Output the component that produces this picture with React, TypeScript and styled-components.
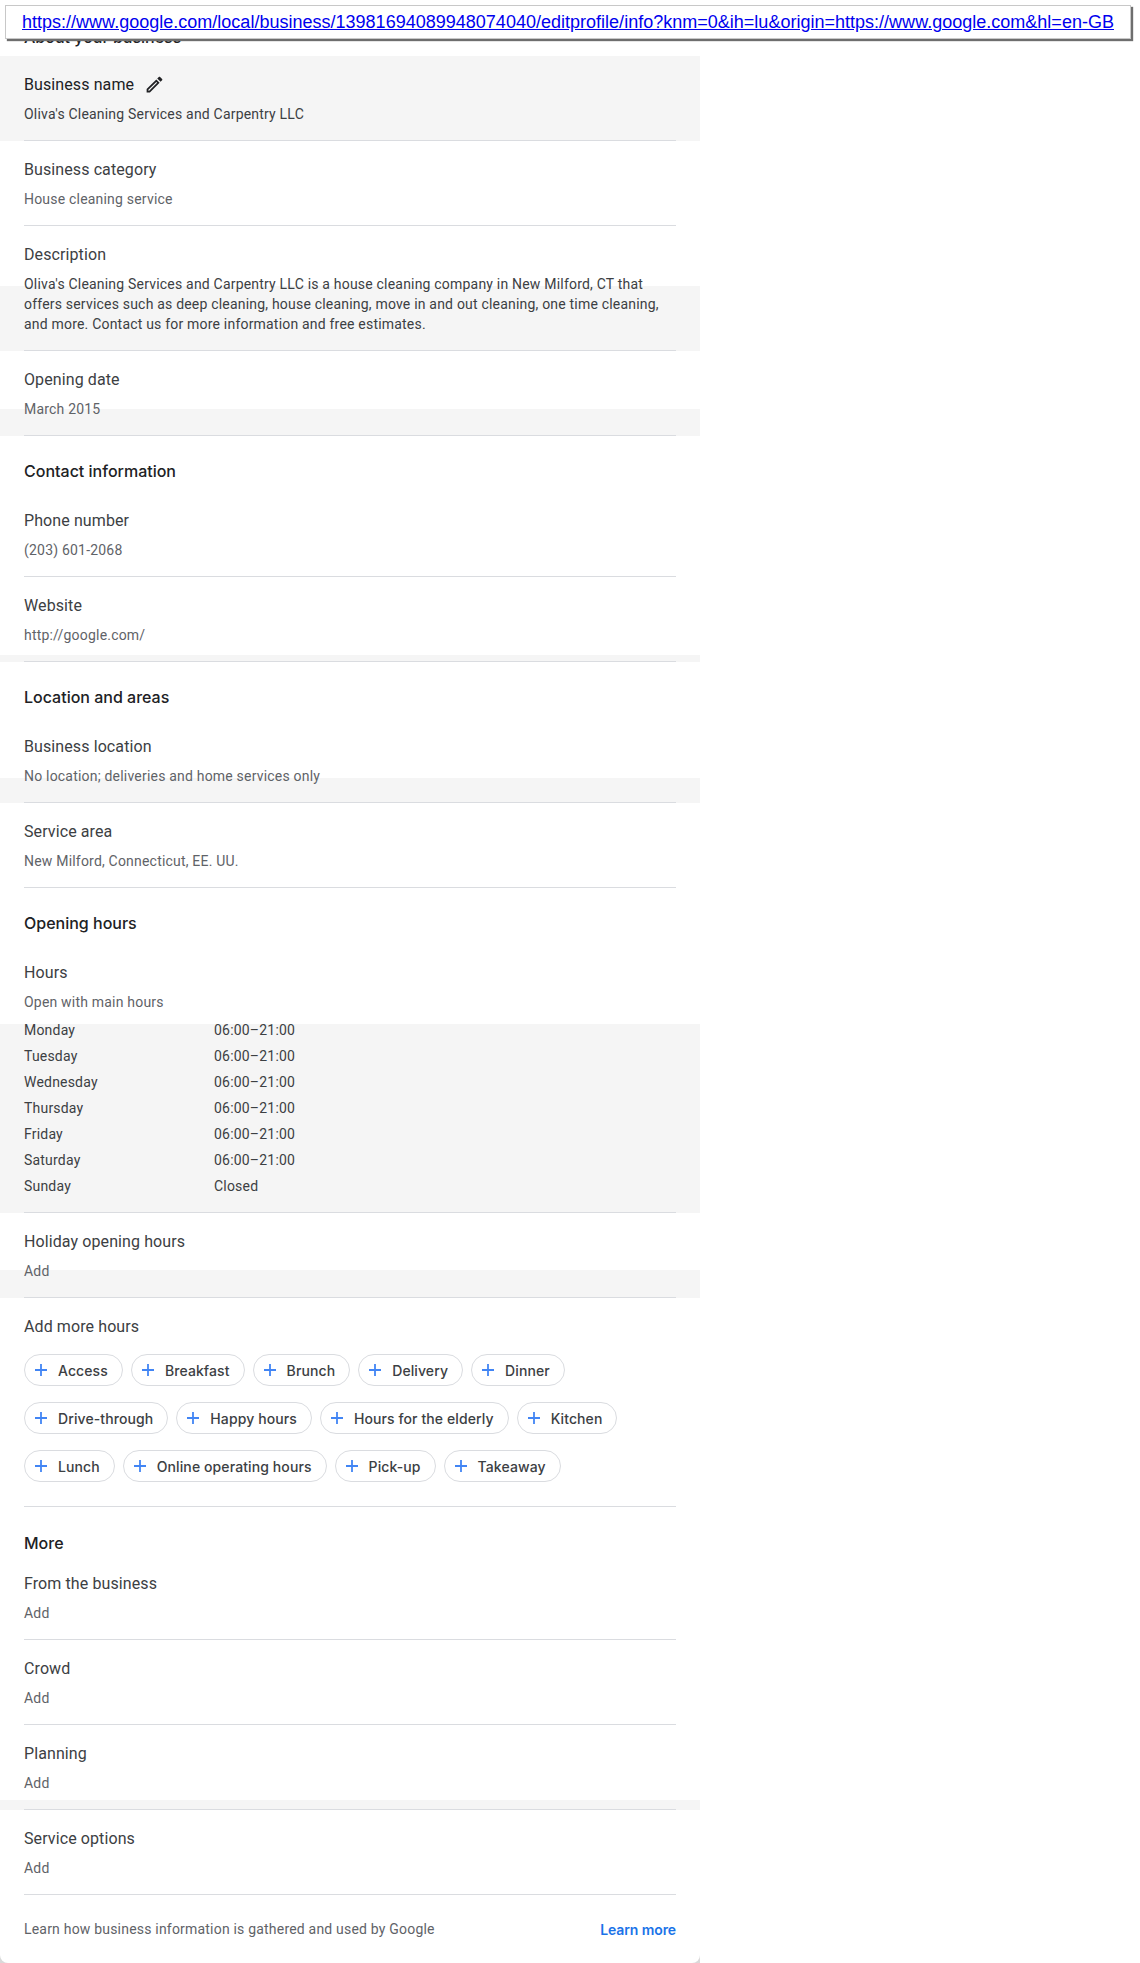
import React from 'react'
import styled, { createGlobalStyle } from 'styled-components'

const GlobalStyle = createGlobalStyle`
  html, body {
    margin: 0;
    padding: 0;
    background: #ffffff;
  }
`

const PROFILE_URL =
  'https://www.google.com/local/business/13981694089948074040/editprofile/info?knm=0&ih=lu&origin=https://www.google.com&hl=en-GB'

const HOURS = [
  ['Monday', '06:00–21:00'],
  ['Tuesday', '06:00–21:00'],
  ['Wednesday', '06:00–21:00'],
  ['Thursday', '06:00–21:00'],
  ['Friday', '06:00–21:00'],
  ['Saturday', '06:00–21:00'],
  ['Sunday', 'Closed'],
]

const CHIP_ROWS = [
  ['Access', 'Breakfast', 'Brunch', 'Delivery', 'Dinner'],
  ['Drive-through', 'Happy hours', 'Hours for the elderly', 'Kitchen'],
  ['Lunch', 'Online operating hours', 'Pick-up', 'Takeaway'],
]

const App = () => {
  return (
    <Page>
      <GlobalStyle />
      <UrlBanner>
        <a href="#url">{PROFILE_URL}</a>
      </UrlBanner>
      <Sheet>
        <Panel>
          <TopTitle>About your business</TopTitle>
          <Row $band={85}>
            <RowInner>
              <Label $strong>
                Business name
                <PencilIcon viewBox="0 0 24 24">
                  <path d="M14.06 9.02l.92.92L5.92 19H5v-.92l9.06-9.06M17.66 3c-.25 0-.51.1-.7.29l-1.83 1.83 3.75 3.75 1.83-1.83c.39-.39.39-1.02 0-1.41l-2.34-2.34c-.2-.2-.45-.29-.71-.29zm-3.6 3.19L3 17.25V21h3.75L17.81 9.94l-3.75-3.75z" />
                </PencilIcon>
              </Label>
              <Value $dark>Oliva's Cleaning Services and Carpentry LLC</Value>
            </RowInner>
          </Row>
          <Row>
            <RowInner>
              <Label>Business category</Label>
              <Value>House cleaning service</Value>
            </RowInner>
          </Row>
          <Row $band={65}>
            <RowInner>
              <Label>Description</Label>
              <Value $dark>
                Oliva's Cleaning Services and Carpentry LLC is a house cleaning company in New Milford, CT that
                offers services such as deep cleaning, house cleaning, move in and out cleaning, one time cleaning,
                and more. Contact us for more information and free estimates.
              </Value>
            </RowInner>
          </Row>
          <Row $band={27}>
            <RowInner>
              <Label>Opening date</Label>
              <Value>March 2015</Value>
            </RowInner>
          </Row>

          <SectionTitle>Contact information</SectionTitle>
          <Row>
            <RowInner>
              <Label>Phone number</Label>
              <Value>(203) 601-2068</Value>
            </RowInner>
          </Row>
          <Row $band={7}>
            <RowInner>
              <Label>Website</Label>
              <Value>http://google.com/</Value>
            </RowInner>
          </Row>

          <SectionTitle>Location and areas</SectionTitle>
          <Row $band={25}>
            <RowInner>
              <Label>Business location</Label>
              <Value>No location; deliveries and home services only</Value>
            </RowInner>
          </Row>
          <Row>
            <RowInner>
              <Label>Service area</Label>
              <Value>New Milford, Connecticut, EE. UU.</Value>
            </RowInner>
          </Row>

          <SectionTitle>Opening hours</SectionTitle>
          <Row $band={189}>
            <RowInner>
              <Label>Hours</Label>
              <Value>Open with main hours</Value>
              <HoursTable>
                {HOURS.map(([day, time]) => (
                  <HoursRow key={day}>
                    <span>{day}</span>
                    <span>{time}</span>
                  </HoursRow>
                ))}
              </HoursTable>
            </RowInner>
          </Row>
          <Row $band={28}>
            <RowInner>
              <Label>Holiday opening hours</Label>
              <Value>Add</Value>
            </RowInner>
          </Row>
          <Row>
            <ChipsInner>
              <Label>Add more hours</Label>
              <ChipGroup>
                {CHIP_ROWS.map((chips) => (
                  <ChipRow key={chips[0]}>
                    {chips.map((chip) => (
                      <Chip key={chip}>
                        <PlusIcon viewBox="0 0 18 18">
                          <path d="M15 9.900H9.900V15H8.100V9.900H3V8.100h5.100V3h1.800v5.100H15z" />
                        </PlusIcon>
                        {chip}
                      </Chip>
                    ))}
                  </ChipRow>
                ))}
              </ChipGroup>
            </ChipsInner>
          </Row>

          <MoreTitle>More</MoreTitle>
          <Row>
            <RowInner>
              <Label>From the business</Label>
              <Value>Add</Value>
            </RowInner>
          </Row>
          <Row>
            <RowInner>
              <Label>Crowd</Label>
              <Value>Add</Value>
            </RowInner>
          </Row>
          <Row $band={10}>
            <RowInner>
              <Label>Planning</Label>
              <Value>Add</Value>
            </RowInner>
          </Row>
          <Row>
            <RowInner>
              <Label>Service options</Label>
              <Value>Add</Value>
            </RowInner>
          </Row>

          <Footer>
            <FooterText>Learn how business information is gathered and used by Google</FooterText>
            <LearnMore href="#learn">Learn more</LearnMore>
          </Footer>
        </Panel>
      </Sheet>
    </Page>
  )
}

const Page = styled.main`
  position: relative;
  width: 1140px;
  height: 1963px;
  overflow: hidden;
  font-family: Roboto, 'Liberation Sans', sans-serif;
`

const UrlBanner = styled.div`
  position: absolute;
  top: 5px;
  left: 5px;
  box-sizing: border-box;
  width: 1126px;
  height: 34px;
  padding: 5px 0 0 16px;
  background: #ffffff;
  border: 1px solid #c8c8c8;
  box-shadow: 2px 2px 1px #6e6e6e;
  font-family: 'Liberation Sans', Arial, sans-serif;
  font-size: 18px;
  letter-spacing: 0.01px;
  line-height: 22px;
  white-space: nowrap;

  a {
    color: #0000ee;
    text-decoration: underline;
  }
`

const Sheet = styled.div`
  width: 700px;
  background: linear-gradient(to top, #d9d9d9 8px, transparent 8px);
`

const Panel = styled.div`
  height: 1963px;
  background: #ffffff;
  border-radius: 0 0 8px 8px;
  overflow: hidden;
`

const SectionTitle = styled.h2`
  margin: 0;
  padding: 23px 24px 9px;
  font-family: Inter, Roboto, sans-serif;
  font-size: 16px;
  font-weight: 500;
  line-height: 24px;
  color: #202124;
`

const TopTitle = styled(SectionTitle)`
  padding: 25px 24px 7px;
`

const MoreTitle = styled(SectionTitle)`
  padding: 24px 24px 0;
`

const Row = styled.div<{ $band?: number }>`
  padding: 0 24px;
  background: ${(p) =>
    p.$band
      ? `linear-gradient(to top, #f5f5f5 ${p.$band}px, transparent ${p.$band}px)`
      : 'transparent'};
`

const RowInner = styled.div`
  padding: 16px 0;
  border-bottom: 1px solid #dadce0;
`

const ChipsInner = styled(RowInner)`
  padding-bottom: 24px;
`

const Label = styled.div<{ $strong?: boolean }>`
  display: flex;
  align-items: center;
  box-sizing: border-box;
  height: 24px;
  padding-top: 2px;
  font-size: 16px;
  letter-spacing: 0.1px;
  line-height: 24px;
  color: ${(p) => (p.$strong ? '#202124' : '#3c4043')};
`

const PencilIcon = styled.svg`
  width: 21px;
  height: 21px;
  margin: -2px 0 0 10px;
  fill: #202124;
`

const Value = styled.div<{ $dark?: boolean }>`
  margin-top: 8px;
  font-size: 14px;
  letter-spacing: 0.2px;
  line-height: 20px;
  color: ${(p) => (p.$dark ? '#3c4043' : '#5f6368')};
`

const HoursTable = styled.div`
  display: flex;
  flex-direction: column;
  gap: 6px;
  margin-top: 8px;
`

const HoursRow = styled.div`
  display: grid;
  grid-template-columns: 190px 1fr;
  font-size: 14px;
  letter-spacing: 0.2px;
  line-height: 20px;
  color: #3c4043;
`

const ChipGroup = styled.div`
  display: flex;
  flex-direction: column;
  gap: 16px;
  margin-top: 16px;
`

const ChipRow = styled.div`
  display: flex;
  gap: 8px;
`

const Chip = styled.div`
  display: flex;
  align-items: center;
  box-sizing: border-box;
  height: 32px;
  padding: 0 14px 0 7px;
  border: 1px solid #dadce0;
  border-radius: 16px;
  font-family: Inter, Roboto, sans-serif;
  font-size: 14px;
  font-weight: 500;
  letter-spacing: 0.1px;
  color: #3c4043;
  white-space: nowrap;
`

const PlusIcon = styled.svg`
  flex: none;
  width: 18px;
  height: 18px;
  margin-right: 8px;
  fill: #4285f4;
`

const Footer = styled.div`
  display: flex;
  align-items: center;
  justify-content: space-between;
  height: 68px;
  padding: 0 24px;
`

const FooterText = styled.span`
  font-size: 14px;
  letter-spacing: 0.2px;
  line-height: 20px;
  color: #5f6368;
`

const LearnMore = styled.a`
  font-family: Inter, Roboto, sans-serif;
  font-size: 14px;
  font-weight: 600;
  letter-spacing: -0.1px;
  color: #1a73e8;
  text-decoration: none;
`

export default App
